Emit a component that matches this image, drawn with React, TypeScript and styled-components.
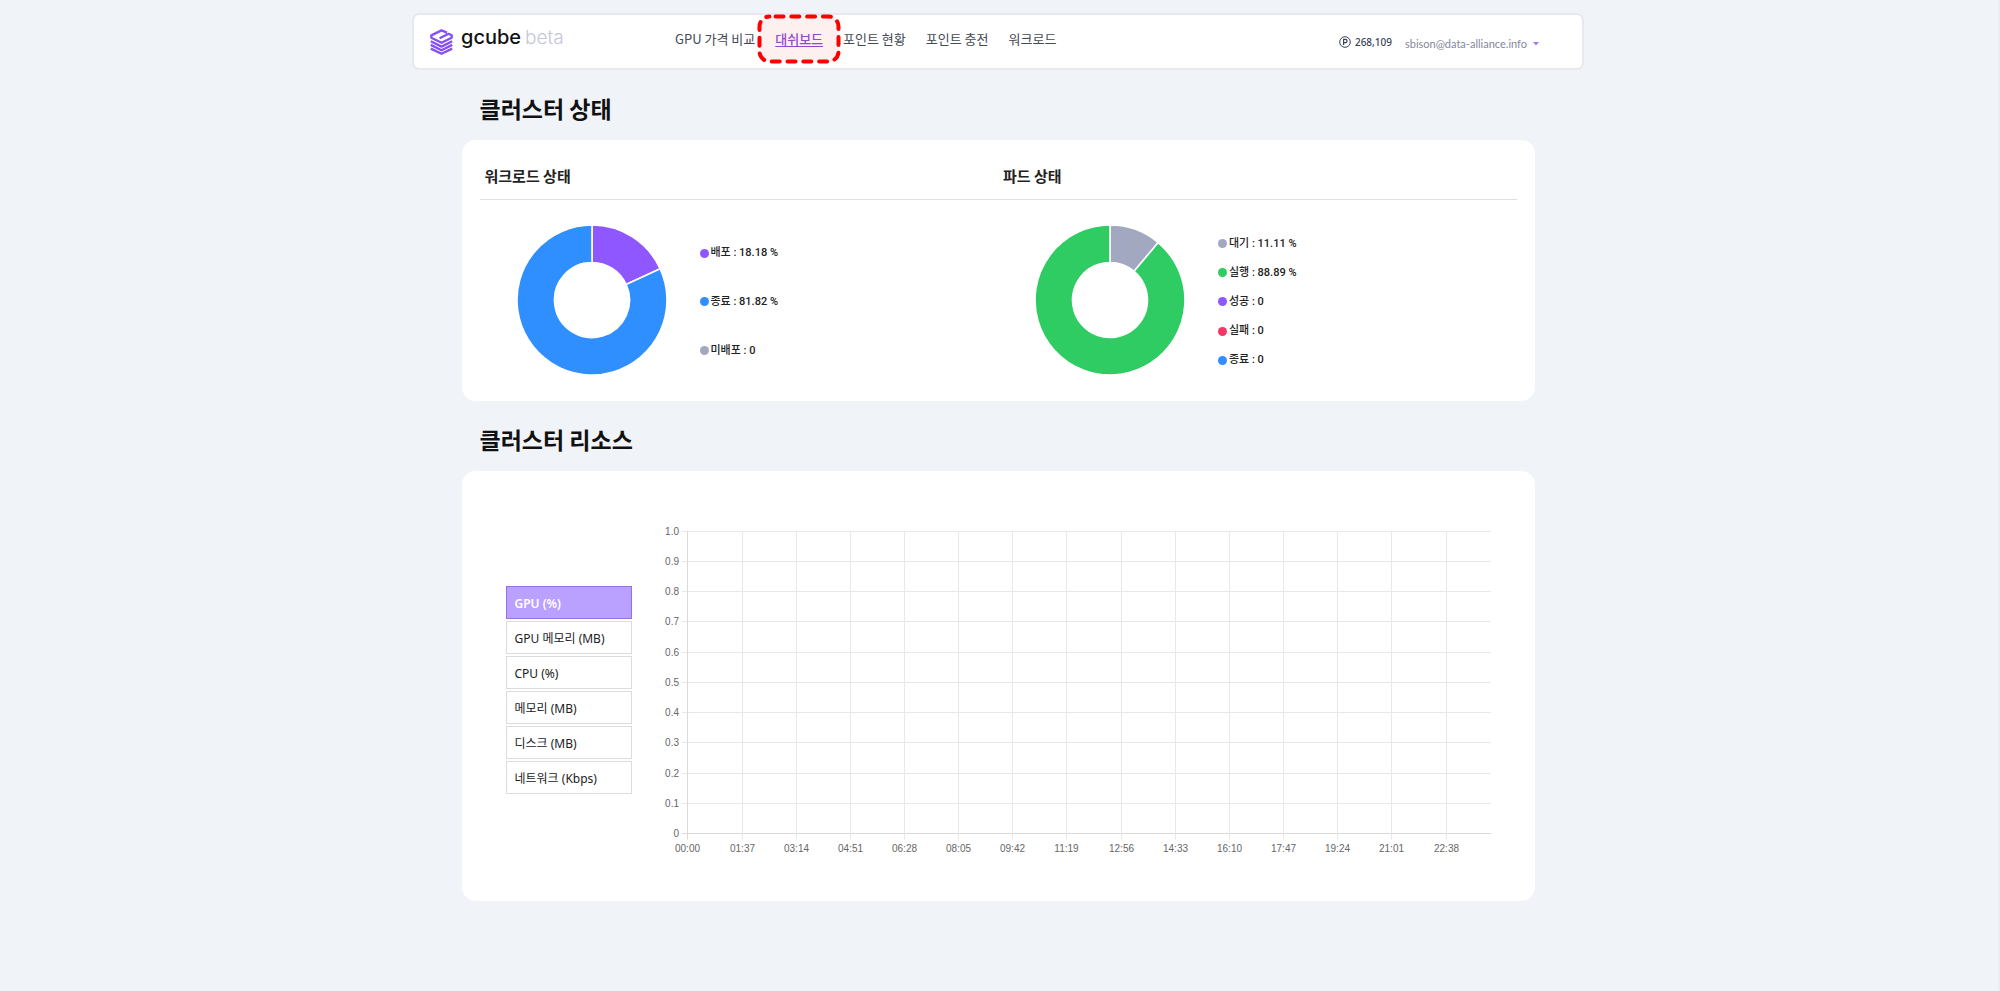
import React, { useState } from "react";
import styled, { createGlobalStyle } from "styled-components";

const sans = `"Noto Sans", "Noto Sans CJK KR", sans-serif`;
const korean = `"Noto Sans CJK KR", "Noto Sans", sans-serif`;

const GlobalStyle = createGlobalStyle`
  * { box-sizing: border-box; }
  body { margin: 0; background: #f0f4f9; font-family: ${sans}; color: #111; }
  h1, h2, ul, p { margin: 0; padding: 0; }
  ul { list-style: none; }
  button { font-family: inherit; cursor: pointer; }
`;

const Page = styled.div`
  min-height: 100vh;
  padding: 13px 2px 48px 0;
  border-right: 2px solid #e9edf6;
`;

const Header = styled.header`
  display: flex;
  align-items: center;
  max-width: 1172px;
  height: 57px;
  margin: 0 auto;
  padding: 0 43px 0 16px;
  background: #fff;
  border: 2px solid #e6e9f0;
  border-radius: 7px;
`;

const Brand = styled.a`
  display: flex;
  align-items: center;
  gap: 8px;
  flex: 0 0 245px;
  text-decoration: none;
  color: #111;
`;

const Wordmark = styled.span`
  font: 500 20px/24px Inter, sans-serif;
  padding-bottom: 8px;
`;

const Beta = styled.span`
  font-size: 19px;
  font-weight: 300;
  color: #c4c7da;
  margin-left: 4px;
`;

const Nav = styled.nav`
  display: flex;
  gap: 20px;
  padding-bottom: 5px;
`;

const NavItem = styled.span`
  position: relative;
  display: flex;
`;

const NavLink = styled.a<{ $active?: boolean }>`
  font: 400 13px/20px ${korean};
  white-space: nowrap;
  color: ${(p) => (p.$active ? "#8a4fd8" : "#444a55")};
  font-weight: ${(p) => (p.$active ? 500 : 400)};
  text-decoration: ${(p) => (p.$active ? "underline" : "none")};
  text-underline-offset: 2px;
`;

const Marker = styled.svg`
  position: absolute;
  left: 50%;
  top: 50%;
  transform: translate(-50%, -50%);
  pointer-events: none;
`;

const Account = styled.div`
  display: flex;
  align-items: center;
  gap: 13px;
  margin-left: auto;
`;

const Points = styled.span`
  display: flex;
  align-items: center;
  gap: 4px;
  font: 500 10px/16px ${sans};
  color: #3a4356;
`;

const UserButton = styled.button`
  display: flex;
  align-items: center;
  gap: 6px;
  padding: 4px 0 0;
  border: 0;
  background: none;
  font: 400 11px/16px Lato, sans-serif;
  color: #85879c;
`;

const Main = styled.main`
  max-width: 1073px;
  margin: 0 auto;
`;

const Section = styled.section`
  padding-top: 24px;
`;

const Title = styled.h1`
  padding: 0 18px;
  margin-bottom: 18px;
  font: 700 23px/28px ${korean};
  color: #111;
`;

const Card = styled.div`
  background: #fff;
  border-radius: 14px;
`;

const StatusCard = styled(Card)`
  display: grid;
  grid-template-columns: 1fr 1fr;
  padding: 24px 18px 26px;
`;

const Subtitle = styled.h2`
  padding: 0 5px 11px;
  border-bottom: 1px solid #dfdfe1;
  font: 700 15px/24px ${korean};
  color: #222;
`;

const StatusBody = styled.div`
  display: flex;
  gap: 33px;
  padding: 25px 0 0 37px;
`;

const Legend = styled.ul`
  display: flex;
  flex-direction: column;
  justify-content: space-around;
  padding-top: 4px;
`;

const LegendItem = styled.li`
  display: flex;
  align-items: center;
  gap: 2px;
  font: 500 11px/16px Roboto, "Noto Sans CJK KR", sans-serif;
  color: #222;
`;

const Dot = styled.span<{ $color: string }>`
  width: 9px;
  height: 9px;
  border-radius: 50%;
  background: ${(p) => p.$color};
`;

const ResourceCard = styled(Card)`
  display: flex;
  align-items: center;
  gap: 24px;
  padding: 49px 39px 41px 44px;
`;

const MetricList = styled.div`
  display: flex;
  flex-direction: column;
  flex: 0 0 126px;
  gap: 2px;
`;

const MetricButton = styled.button<{ $active: boolean }>`
  height: 33px;
  padding: 2px 8px 0;
  text-align: left;
  font: 400 12px/20px ${sans};
  font-weight: ${(p) => (p.$active ? 600 : 400)};
  color: ${(p) => (p.$active ? "#fff" : "#222")};
  background: ${(p) => (p.$active ? "#baa1ff" : "#fff")};
  border: 1px solid ${(p) => (p.$active ? "#9670e6" : "#dcdcdc")};
`;

const Plot = styled.svg`
  flex: 1;
  min-width: 0;
  font: 10px "Liberation Sans", sans-serif;
  fill: #666;
`;

const LogoIcon = () => (
  <svg width="23" height="26" viewBox="0 0 23 26" fill="none" stroke="#8550f5" strokeWidth="2.3" strokeLinejoin="round">
    <path d="M17 3.6 11.5 1.4 1.3 6.4v2.4l10.2 5 10.2-5V6.2L18.6 4.8 9.6 9.2" />
    <path d="M.8 12.2l10.7 5.4 10.7-5.4" />
    <path d="M.8 15.9l10.7 5.4 10.7-5.4" />
    <path d="M.8 19.6l10.7 5.2 10.7-5.2" />
  </svg>
);

type Slice = { label: string; percent: number; color: string };

const Donut = ({ slices, name }: { slices: Slice[]; name: string }) => {
  const outer = 75;
  const inner = 37.5;
  let start = 0;
  const point = (r: number, share: number) => {
    const a = share * 2 * Math.PI;
    return `${75 + r * Math.sin(a)} ${75 - r * Math.cos(a)}`;
  };
  return (
    <svg width="150" height="150" viewBox="0 0 150 150" role="img" aria-label={name}>
      {slices
        .filter((s) => s.percent > 0)
        .map((s) => {
          const end = start + s.percent / 100;
          const large = end - start > 0.5 ? 1 : 0;
          const d = `M${point(outer, start)}A${outer} ${outer} 0 ${large} 1 ${point(outer, end)}L${point(inner, end)}A${inner} ${inner} 0 ${large} 0 ${point(inner, start)}Z`;
          start = end;
          return <path key={s.label} d={d} fill={s.color} stroke="#fff" strokeWidth="1.6" />;
        })}
    </svg>
  );
};

const workloads: Slice[] = [
  { label: "배포", percent: 18.18, color: "#8f57ff" },
  { label: "종료", percent: 81.82, color: "#2f8fff" },
  { label: "미배포", percent: 0, color: "#a1a8bf" },
];

const pods: Slice[] = [
  { label: "대기", percent: 11.11, color: "#a1a8bf" },
  { label: "실행", percent: 88.89, color: "#2fcc64" },
  { label: "성공", percent: 0, color: "#8f57ff" },
  { label: "실패", percent: 0, color: "#f53768" },
  { label: "종료", percent: 0, color: "#2f8fff" },
];

const StatusPanel = ({ name, slices }: { name: string; slices: Slice[] }) => (
  <div>
    <Subtitle>{name}</Subtitle>
    <StatusBody>
      <Donut slices={slices} name={name} />
      <Legend>
        {slices.map((s) => (
          <LegendItem key={s.label}>
            <Dot $color={s.color} />
            <span>{`${s.label} : ${s.percent ? `${s.percent} %` : "0"}`}</span>
          </LegendItem>
        ))}
      </Legend>
    </StatusBody>
  </div>
);

const times = ["00:00", "01:37", "03:14", "04:51", "06:28", "08:05", "09:42", "11:19", "12:56", "14:33", "16:10", "17:47", "19:24", "21:01", "22:38"];
const levels = ["0", "0.1", "0.2", "0.3", "0.4", "0.5", "0.6", "0.7", "0.8", "0.9", "1.0"];

const UsageChart = ({ name }: { name: string }) => {
  const left = 31.9;
  const right = 835;
  const bottom = 314;
  const x = (i: number) => Math.floor(left + i * 54.15) + 0.5;
  const y = (i: number) => Math.round(bottom - i * 30.25) - 0.5;
  return (
    <Plot viewBox="0 0 840 340" role="img" aria-label={name}>
      {levels.map((l, i) => (
        <g key={l}>
          <path d={`M26 ${y(i)}H${right}`} stroke={i === 0 ? "#dadada" : "#e8e8e8"} />
          <text x="23" y={y(i) + 3} textAnchor="end">{l}</text>
        </g>
      ))}
      {times.map((t, i) => (
        <g key={t}>
          <path d={`M${x(i)} ${y(10)}V${y(0) + 6}`} stroke={i === 0 ? "#dadada" : "#e8e8e8"} />
          <text x={x(i)} y={y(0) + 18} textAnchor="middle">{t}</text>
        </g>
      ))}
    </Plot>
  );
};

const menu = ["GPU 가격 비교", "대쉬보드", "포인트 현황", "포인트 충전", "워크로드"];
const metrics = ["GPU (%)", "GPU 메모리 (MB)", "CPU (%)", "메모리 (MB)", "디스크 (MB)", "네트워크 (Kbps)"];

export default function App() {
  const [metric, setMetric] = useState(metrics[0]);
  return (
    <Page>
      <GlobalStyle />
      <Header>
        <Brand href="#">
          <LogoIcon />
          <Wordmark>
            gcube<Beta>beta</Beta>
          </Wordmark>
        </Brand>
        <Nav>
          {menu.map((item) => {
            const active = item === "대쉬보드";
            return (
              <NavItem key={item}>
                {active && (
                  <Marker width="84" height="50" viewBox="0 0 84 50" aria-hidden="true">
                    <rect x="2.5" y="2.5" width="79" height="45" rx="10" fill="#f00" fillOpacity=".06" stroke="#f00" strokeWidth="4" strokeLinecap="round" strokeDasharray="8 7.8" strokeDashoffset="-6" />
                  </Marker>
                )}
                <NavLink href="#" $active={active}>{item}</NavLink>
              </NavItem>
            );
          })}
        </Nav>
        <Account>
          <Points>
            <svg width="12" height="12" viewBox="0 0 12 12" fill="none" stroke="#3a4356" aria-hidden="true">
              <circle cx="6" cy="6" r="5.3" />
              <path d="M4.6 9V3.4h1.8a1.6 1.6 0 0 1 0 3.3H4.6" strokeWidth="1.2" />
            </svg>
            268,109
          </Points>
          <UserButton type="button">
            sbison@data-alliance.info
            <svg width="6" height="4" viewBox="0 0 6 4" aria-hidden="true">
              <path d="M0 0h6L3 3.5z" fill="#a67df2" />
            </svg>
          </UserButton>
        </Account>
      </Header>
      <Main>
        <Section>
          <Title>클러스터 상태</Title>
          <StatusCard>
            <StatusPanel name="워크로드 상태" slices={workloads} />
            <StatusPanel name="파드 상태" slices={pods} />
          </StatusCard>
        </Section>
        <Section>
          <Title>클러스터 리소스</Title>
          <ResourceCard>
            <MetricList>
              {metrics.map((m) => (
                <MetricButton key={m} type="button" $active={m === metric} onClick={() => setMetric(m)}>
                  {m}
                </MetricButton>
              ))}
            </MetricList>
            <UsageChart name={metric} />
          </ResourceCard>
        </Section>
      </Main>
    </Page>
  );
}
